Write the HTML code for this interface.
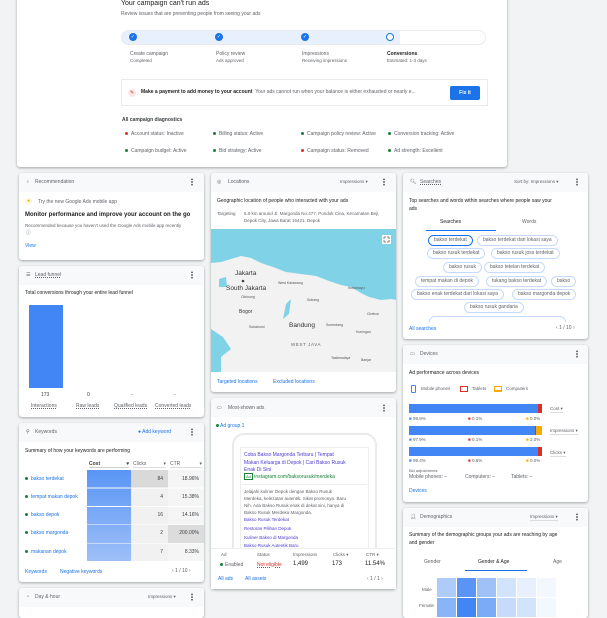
<!DOCTYPE html>
<html><head><meta charset="utf-8"><style>
*{margin:0;padding:0;box-sizing:border-box}
body{width:607px;height:607px;overflow:hidden;background:#f1f3f4;font-family:"Liberation Sans",sans-serif;color:#3c4043;position:relative}
.a{position:absolute;white-space:nowrap}
.card{position:absolute;background:#fff;border-radius:3px;box-shadow:0 1px 2px rgba(60,64,67,.3),0 1px 3px rgba(60,64,67,.15);overflow:hidden}
.hd{position:absolute;left:0;right:0;top:0;height:19px;background:#f8f9fa}
.s5{font-size:5px}.s6{font-size:6px}.s7{font-size:7px}
.b{font-weight:bold}.blue{color:#1a73e8}.g{color:#5f6368}
.keb{position:absolute;width:2px;height:8px;background:radial-gradient(circle,#5f6368 0.9px,transparent 1px) 0 0/2px 2.7px}
.dot{display:inline-block;width:3px;height:3px;border-radius:50%;margin-right:3px;vertical-align:middle}
.chip{position:absolute;height:11px;border:1px solid #c6dafc;border-radius:6px;font-size:5px;line-height:9px;padding:0 5px;color:#5f6368;white-space:nowrap}
.chk{position:absolute;width:8px;height:8px;border-radius:50%;background:#1a73e8;color:#fff;font-size:5px;line-height:8px;text-align:center}
</style></head><body>

<!-- top card -->
<div class="card" style="left:17px;top:-5px;width:490px;height:172px"></div>
<div class="a s7" style="left:121px;top:0px;color:#202124">Your campaign can't run ads</div>
<div class="a s5 g" style="left:121px;top:11px">Review issues that are preventing people from seeing your ads</div>
<div class="a" style="left:121px;top:30px;width:365px;height:15px;border:1px solid #e8eaed;border-radius:8px;background:linear-gradient(90deg,#e8f0fe 0,#e8f0fe 278px,#fff 278px)"></div>
<div class="chk" style="left:129px;top:33px">✓</div>
<div class="chk" style="left:215px;top:33px">✓</div>
<div class="chk" style="left:301px;top:33px">✓</div>
<div class="a" style="left:386px;top:33px;width:8px;height:8px;border-radius:50%;border:1px solid #1a73e8;background:#fff"></div>
<div class="a s5 g" style="left:130px;top:51px">Create campaign</div>
<div class="a s5 g" style="left:130px;top:58px;font-size:4.5px">Completed</div>
<div class="a s5 g" style="left:216px;top:51px">Policy review</div>
<div class="a s5 g" style="left:216px;top:58px;font-size:4.5px">Ads approved</div>
<div class="a s5 g" style="left:302px;top:51px">Impressions</div>
<div class="a s5 g" style="left:302px;top:58px;font-size:4.5px">Receiving impressions</div>
<div class="a s5 b" style="left:387px;top:51px;color:#202124">Conversions</div>
<div class="a s5 g" style="left:387px;top:58px;font-size:4.5px">Estimated: 1-3 days</div>
<div class="a" style="left:121px;top:79px;width:367px;height:27px;border:1px solid #e8eaed"></div>
<div class="a" style="left:128px;top:89px;width:8px;height:8px;border-radius:50%;background:#fce8e6;color:#d93025;font-size:5px;text-align:center;line-height:8px">✎</div>
<div class="a s5" style="left:141px;top:89px"><b style="color:#202124">Make a payment to add money to your account</b> <span class="g">&nbsp;Your ads cannot run when your balance is either exhausted or nearly e...</span></div>
<div class="a s5 b" style="left:450px;top:86px;width:30px;height:14px;background:#1a73e8;color:#fff;border-radius:2px;text-align:center;line-height:14px">Fix it</div>
<div class="a s5 b" style="left:122px;top:117px;color:#3c4043">All campaign diagnostics</div>
<div class="a s5 g" style="left:125px;top:131px"><span class="dot" style="background:#d93025"></span>Account status: Inactive</div>
<div class="a s5 g" style="left:213px;top:131px"><span class="dot" style="background:#188038"></span>Billing status: Active</div>
<div class="a s5 g" style="left:301px;top:131px"><span class="dot" style="background:#188038"></span>Campaign policy review: Active</div>
<div class="a s5 g" style="left:388px;top:131px"><span class="dot" style="background:#188038"></span>Conversion tracking: Active</div>
<div class="a s5 g" style="left:125px;top:148px"><span class="dot" style="background:#188038"></span>Campaign budget: Active</div>
<div class="a s5 g" style="left:213px;top:148px"><span class="dot" style="background:#188038"></span>Bid strategy: Active</div>
<div class="a s5 g" style="left:301px;top:148px"><span class="dot" style="background:#d93025"></span>Campaign status: Removed</div>
<div class="a s5 g" style="left:388px;top:148px"><span class="dot" style="background:#188038"></span>Ad strength: Excellent</div>

<!-- Recommendation -->
<div class="card" style="left:19px;top:173px;width:185px;height:87px"><div class="hd"></div></div>
<div class="a s5 g" style="left:26px;top:179px">♁</div>
<div class="a s5 g" style="left:35px;top:179px">Recommendation</div>
<div class="keb" style="left:191px;top:178px"></div>
<div class="a" style="left:25px;top:198px;width:7px;height:7px;border-radius:50%;background:#fef7e0;color:#f9ab00;font-size:5px;line-height:7px;text-align:center">●</div>
<div class="a s5 g" style="left:38px;top:199px">Try the new Google Ads mobile app</div>
<div class="a s6 b" style="left:25px;top:212px;color:#202124">Monitor performance and improve your account on the go</div>
<div class="a g" style="left:25px;top:223px;font-size:4.5px">Recommended because you haven't used the Google Ads mobile app recently</div>
<div class="a g" style="left:26px;top:229px;font-size:5px">ⓘ</div>
<div class="a s5 blue" style="left:25px;top:243px">View</div>

<!-- Lead funnel -->
<div class="card" style="left:19px;top:266px;width:185px;height:151px"><div class="hd"></div></div>
<div class="a s5 g" style="left:26px;top:272px">☰</div>
<div class="a s5 g" style="left:35px;top:272px;text-decoration:underline dotted">Lead funnel</div>
<div class="keb" style="left:191px;top:271px"></div>
<div class="a s5" style="left:25px;top:290px;color:#202124">Total conversions through your entire lead funnel</div>
<div class="a" style="left:29px;top:305px;width:34px;height:83px;background:#4285f4"></div>
<div class="a s5" style="left:41px;top:392px">173</div>
<div class="a s5" style="left:87px;top:392px">0</div>
<div class="a s5" style="left:131px;top:392px">-</div>
<div class="a s5" style="left:174px;top:392px">-</div>
<div class="a s5 g" style="left:31px;top:403px;text-decoration:underline dotted">Interactions</div>
<div class="a s5 g" style="left:76px;top:403px;text-decoration:underline dotted">Raw leads</div>
<div class="a s5 g" style="left:114px;top:403px;text-decoration:underline dotted">Qualified leads</div>
<div class="a s5 g" style="left:155px;top:403px;text-decoration:underline dotted">Converted leads</div>

<!-- Keywords -->
<div class="card" style="left:19px;top:423px;width:185px;height:159px"><div class="hd"></div></div>
<div class="a s5 g" style="left:26px;top:429px">⚲</div>
<div class="a s5 g" style="left:35px;top:429px">Keywords</div>
<div class="a s5 blue" style="left:138px;top:429px">● Add keyword</div>
<div class="keb" style="left:191px;top:428px"></div>
<div class="a s5" style="left:25px;top:448px;color:#202124">Summary of how your keywords are performing</div>
<div class="a s5 b" style="left:89px;top:461px;width:40px;border-bottom:1px solid #ccc">Cost<span style="float:right">▾</span></div>
<div class="a s5 g" style="left:133px;top:461px;width:33px;border-bottom:1px solid #ddd">Clicks<span style="float:right">▾</span></div>
<div class="a s5 g" style="left:170px;top:461px;width:32px;border-bottom:1px solid #ddd">CTR<span style="float:right">▾</span></div>
<div class="a" style="left:87px;top:470px;width:44px;height:92px;background:linear-gradient(#5a95f5,#9fc0f8)"></div>
<div class="a" style="left:131px;top:470px;width:37px;height:18px;background:#d9d9d9"></div>
<div class="a" style="left:131px;top:488px;width:37px;height:74px;background:#f1f1f1"></div>
<div class="a" style="left:168px;top:470px;width:36px;height:92px;background:#f5f5f5"></div>
<div class="a" style="left:168px;top:525px;width:36px;height:18px;background:#dcdcdc"></div>
<div class="a" style="left:19px;top:470px;width:185px;height:92px;background:repeating-linear-gradient(transparent 0,transparent 17.6px,#fff 17.6px,#fff 18.4px)"></div>
<div class="a s5 blue" style="left:25px;top:476px"><span class="dot" style="background:#188038"></span>bakso terdekat</div>
<div class="a s5 blue" style="left:25px;top:494px"><span class="dot" style="background:#188038"></span>tempat makan depok</div>
<div class="a s5 blue" style="left:25px;top:512px"><span class="dot" style="background:#188038"></span>bakso depok</div>
<div class="a s5 blue" style="left:25px;top:530px"><span class="dot" style="background:#188038"></span>bakso margonda</div>
<div class="a s5 blue" style="left:25px;top:549px"><span class="dot" style="background:#188038"></span>makanan depok</div>
<div class="a s5" style="left:141px;top:476px;width:22px;text-align:right">84</div>
<div class="a s5" style="left:141px;top:494px;width:22px;text-align:right">4</div>
<div class="a s5" style="left:141px;top:512px;width:22px;text-align:right">16</div>
<div class="a s5" style="left:141px;top:530px;width:22px;text-align:right">2</div>
<div class="a s5" style="left:141px;top:549px;width:22px;text-align:right">7</div>
<div class="a s5" style="left:170px;top:476px;width:29px;text-align:right">18.96%</div>
<div class="a s5" style="left:170px;top:494px;width:29px;text-align:right">15.38%</div>
<div class="a s5" style="left:170px;top:512px;width:29px;text-align:right">14.16%</div>
<div class="a s5" style="left:170px;top:530px;width:29px;text-align:right">200.00%</div>
<div class="a s5" style="left:170px;top:549px;width:29px;text-align:right">8.33%</div>
<div class="a s5 blue" style="left:25px;top:569px">Keywords</div>
<div class="a s5 blue" style="left:60px;top:569px">Negative keywords</div>
<div class="a s5 g" style="left:172px;top:568px">‹ 1 / 10 ›</div>

<!-- Day & hour -->
<div class="card" style="left:19px;top:588px;width:185px;height:30px"><div class="hd"></div></div>
<div class="a s5 g" style="left:26px;top:594px">◔</div>
<div class="a s5 g" style="left:35px;top:594px">Day &amp; hour</div>
<div class="a g" style="left:148px;top:594px;font-size:4.5px">Impressions ▾</div>
<div class="keb" style="left:191px;top:593px"></div>

<!-- Locations -->
<div class="card" style="left:211px;top:173px;width:185px;height:219px"><div class="hd"></div></div>
<div class="a s5 g" style="left:217px;top:179px">◎</div>
<div class="a s5 g" style="left:228px;top:179px">Locations</div>
<div class="a g" style="left:340px;top:179px;font-size:4.5px">Impressions ▾</div>
<div class="keb" style="left:383px;top:178px"></div>
<div class="a s5" style="left:217px;top:198px;color:#202124">Geographic location of people who interacted with your ads</div>
<div class="a g" style="left:217px;top:211px;font-size:4.5px">Targeting</div>
<div class="a g" style="left:244px;top:211px;font-size:4.5px;line-height:6.5px">5.0 km around Jl. Margonda No.477, Pondok Cina, Kecamatan Beji,<br>Depok City, Jawa Barat 16421, Depok</div>
<svg class="a" style="left:211px;top:229px" width="185" height="143" viewBox="0 0 185 143">
<rect width="185" height="143" fill="#80d3e7"/>
<path d="M0 34 L10 33 L20 30 L30 27 L40 29 L50 34 L62 38 L75 43 L90 45 L105 47 L118 52 L130 56 L140 58 L150 64 L158 68 L170 71 L180 70 L185 71 L185 143 L10 143 L10 128 L20 120 L12 108 L0 100 Z" fill="#f2f2f2"/>
<path d="M75 75 L80 70 L78 85 L72 90 Z M8 50 L15 48 L16 58 L8 58Z" fill="#80d3e7"/>
<circle cx="32" cy="52" r="1.3" fill="#444"/>
<text x="24" y="46" font-size="6.5" font-family="Liberation Sans" fill="#333">Jakarta</text>
<text x="15" y="61" font-size="6.5" font-family="Liberation Sans" fill="#333">South Jakarta</text>
<text x="30" y="69" font-size="3.5" font-family="Liberation Sans" fill="#555">Cibinong</text>
<text x="28" y="84" font-size="5" font-family="Liberation Sans" fill="#333">Bogor</text>
<text x="67" y="55" font-size="3.5" font-family="Liberation Sans" fill="#555">West Karawang</text>
<text x="96" y="72" font-size="3.5" font-family="Liberation Sans" fill="#555">Subang</text>
<text x="137" y="60" font-size="3.5" font-family="Liberation Sans" fill="#555">Indramayu</text>
<text x="156" y="86" font-size="3.5" font-family="Liberation Sans" fill="#555">Cirebon</text>
<text x="38" y="99" font-size="3.5" font-family="Liberation Sans" fill="#555">Sukabumi</text>
<text x="78" y="98" font-size="6.5" font-family="Liberation Sans" fill="#333">Bandung</text>
<text x="115" y="97" font-size="3.5" font-family="Liberation Sans" fill="#555">Sumedang</text>
<text x="145" y="104" font-size="3.5" font-family="Liberation Sans" fill="#555">Kuningan</text>
<text x="80" y="117" font-size="4.5" font-family="Liberation Sans" fill="#666" letter-spacing="0.6">WEST JAVA</text>
<text x="120" y="130" font-size="3.5" font-family="Liberation Sans" fill="#555">Tasikmalaya</text>
<text x="150" y="132" font-size="3.5" font-family="Liberation Sans" fill="#555">Banjar</text>
<rect x="171" y="6" width="9" height="9" fill="#fff"/><path d="M173 10V8h2M176 8h2v2M178 11v2h-2M175 13h-2v-2" stroke="#666" stroke-width="0.8" fill="none"/>
</svg>
<div class="a s5 blue" style="left:217px;top:379px">Targeted locations</div>
<div class="a s5 blue" style="left:273px;top:379px">Excluded locations</div>

<!-- Most-shown ads -->
<div class="card" style="left:211px;top:398px;width:185px;height:191px"><div class="hd"></div></div>
<div class="a s5 g" style="left:217px;top:405px">▭</div>
<div class="a s5 g" style="left:228px;top:405px">Most-shown ads</div>
<div class="keb" style="left:383px;top:404px"></div>
<div class="a s5 blue" style="left:216px;top:423px"><span class="dot" style="background:#188038;margin-right:1px"></span>Ad group 1</div>
<div class="a" style="left:232px;top:433px;width:145px;height:130px;border:2px solid #e8eaed;border-radius:12px"></div>
<div class="a" style="left:240px;top:447px;width:129px;height:110px;border:1px solid #eee"></div>
<div class="a s5" style="left:244px;top:452px;color:#4a3bd0;line-height:7.5px">Coba Bakso Margonda Terbaru | Tempat<br>Makan Keluarga di Depok | Cari Bakso Rusuk<br>Enak Di Sini</div>
<div class="a s5" style="left:244px;top:474px;color:#188038"><span style="border:1px solid #188038;padding:0 1px;font-size:4px">Ad</span> instagram.com/baksorusuk/merdeka</div>
<div class="a" style="left:242px;top:484px;width:125px;height:1px;background:#eee"></div>
<div class="a g" style="left:244px;top:488px;font-size:4.5px;line-height:7px">Jelajahi kuliner Depok dengan Bakso Rusuk<br>Merdeka, kelezatan autentik. Sikat promonya. Baru<br>Nih. Ada Bakso Rusuk enak di dekat sini, hanya di<br>Bakso Rusuk Merdeka Margonda.</div>
<div class="a" style="left:244px;top:516px;font-size:4.5px;color:#4a3bd0;line-height:8.8px">Bakso Rusuk Terdekat<br>Restoran Pilihan Depok<br>Kuliner Bakso di Margonda<br>Bakso Rusuk Autentik Baru</div>
<div class="a" style="left:211px;top:548px;width:185px;height:41px;background:#fff;border-top:1px solid #eee"></div>
<div class="a g" style="left:221px;top:552px;font-size:4.5px">Ad</div>
<div class="a g" style="left:257px;top:552px;font-size:4.5px">Status</div>
<div class="a g" style="left:293px;top:552px;font-size:4.5px">Impressions</div>
<div class="a g" style="left:333px;top:552px;font-size:4.5px">Clicks ▾</div>
<div class="a g" style="left:366px;top:552px;font-size:4.5px">CTR ▾</div>
<div class="a s5 g" style="left:220px;top:562px"><span class="dot" style="background:#188038;margin-right:2px"></span>Enabled</div>
<div class="a s5" style="left:257px;top:562px;color:#d93025;text-decoration:underline dotted">Not eligible</div>
<div class="a s6" style="left:293px;top:561px;color:#202124">1,499</div>
<div class="a s6" style="left:332px;top:561px;color:#202124">173</div>
<div class="a s6" style="left:365px;top:561px;color:#202124">11.54%</div>
<div class="a s5 blue" style="left:218px;top:576px">All ads</div>
<div class="a s5 blue" style="left:245px;top:576px">All assets</div>
<div class="a s5 g" style="left:367px;top:576px">‹ 1 / 1 ›</div>

<!-- Searches -->
<div class="card" style="left:403px;top:173px;width:185px;height:166px"><div class="hd"></div></div>
<div class="a s5 g" style="left:410px;top:179px">🔍︎</div>
<div class="a s5 g" style="left:420px;top:179px;text-decoration:underline dotted">Searches</div>
<div class="a g" style="left:514px;top:179px;font-size:4.5px">Sort by: Impressions ▾</div>
<div class="keb" style="left:576px;top:178px"></div>
<div class="a s5" style="left:409px;top:198px;color:#202124;line-height:7.5px">Top searches and words within searches where people saw your<br>ads</div>
<div class="a s5" style="left:440px;top:219px;color:#202124">Searches</div>
<div class="a s5 g" style="left:522px;top:219px">Words</div>
<div class="a" style="left:426px;top:230px;width:70px;height:1px;background:#1a73e8"></div>
<div class="chip" style="left:428px;top:235px;border-color:#1a73e8">bakso terdekat</div>
<div class="chip" style="left:477px;top:235px">bakso terdekat dari lokasi saya</div>
<div class="chip" style="left:427px;top:248px">bakso rusuk terdekat</div>
<div class="chip" style="left:491px;top:248px">bakso rusuk joss terdekat</div>
<div class="chip" style="left:443px;top:262px">bakso rusuk</div>
<div class="chip" style="left:484px;top:262px">bakso tetelan terdekat</div>
<div class="chip" style="left:415px;top:276px">tempat makan di depok</div>
<div class="chip" style="left:486px;top:276px">tukang bakso terdekat</div>
<div class="chip" style="left:551px;top:276px">bakso</div>
<div class="chip" style="left:411px;top:289px">bakso enak terdekat dari lokasi saya</div>
<div class="chip" style="left:512px;top:289px">bakso margonda depok</div>
<div class="chip" style="left:464px;top:302px">bakso rusuk gandaria</div>
<div class="a" style="left:429px;top:316px;width:137px;height:6px;border:1px solid #c6dafc;border-bottom:none;border-radius:6px 6px 0 0"></div>
<div class="a s5 blue" style="left:409px;top:326px">All searches</div>
<div class="a s5 g" style="left:556px;top:325px">‹ 1 / 10 ›</div>

<!-- Devices -->
<div class="card" style="left:403px;top:345px;width:185px;height:157px"><div class="hd"></div></div>
<div class="a s5 g" style="left:410px;top:351px">▭</div>
<div class="a s5 g" style="left:420px;top:351px">Devices</div>
<div class="keb" style="left:576px;top:350px"></div>
<div class="a s5" style="left:409px;top:370px;color:#202124">Ad performance across devices</div>
<div class="a" style="left:411px;top:385px;width:5px;height:8px;border:1px solid #4285f4;border-radius:1px"></div>
<div class="a g" style="left:421px;top:386px;font-size:4.5px">Mobile phones</div>
<div class="a" style="left:460px;top:386px;width:8px;height:6px;border:1px solid #d93025"></div>
<div class="a g" style="left:472px;top:386px;font-size:4.5px">Tablets</div>
<div class="a" style="left:494px;top:386px;width:8px;height:6px;border:1px solid #f9ab00;border-bottom-width:2px"></div>
<div class="a g" style="left:506px;top:386px;font-size:4.5px">Computers</div>
<div class="a" style="left:409px;top:404px;width:133px;height:9px;background:linear-gradient(90deg,#4285f4 0,#4285f4 129px,#d93025 129px)"></div>
<div class="a" style="left:409px;top:426px;width:133px;height:9px;background:linear-gradient(90deg,#4285f4 0,#4285f4 126px,#d93025 126px,#d93025 127px,#f9ab00 127px)"></div>
<div class="a" style="left:409px;top:447px;width:133px;height:9px;background:linear-gradient(90deg,#4285f4 0,#4285f4 129px,#d93025 129px)"></div>
<div class="a g" style="left:409px;top:416px;font-size:4.5px"><span style="color:#4285f4">■</span> 99.9%</div>
<div class="a g" style="left:468px;top:416px;font-size:4.5px"><span style="color:#d93025">■</span> 0.1%</div>
<div class="a g" style="left:526px;top:416px;font-size:4.5px"><span style="color:#f9ab00">■</span> 0.0%</div>
<div class="a g" style="left:409px;top:437px;font-size:4.5px"><span style="color:#4285f4">■</span> 97.9%</div>
<div class="a g" style="left:468px;top:437px;font-size:4.5px"><span style="color:#d93025">■</span> 0.1%</div>
<div class="a g" style="left:526px;top:437px;font-size:4.5px"><span style="color:#f9ab00">■</span> 2.0%</div>
<div class="a g" style="left:409px;top:458px;font-size:4.5px"><span style="color:#4285f4">■</span> 99.4%</div>
<div class="a g" style="left:468px;top:458px;font-size:4.5px"><span style="color:#d93025">■</span> 0.6%</div>
<div class="a g" style="left:526px;top:458px;font-size:4.5px"><span style="color:#f9ab00">■</span> 0.0%</div>
<div class="a g" style="left:550px;top:406px;font-size:4.5px;border-bottom:1px solid #ddd">Cost ▾</div>
<div class="a g" style="left:550px;top:428px;font-size:4.5px;border-bottom:1px solid #ddd">Impressions ▾</div>
<div class="a g" style="left:550px;top:450px;font-size:4.5px;border-bottom:1px solid #ddd">Clicks ▾</div>
<div class="a g" style="left:409px;top:468px;font-size:4px">Bid adjustments</div>
<div class="a s5 g" style="left:409px;top:474px">Mobile phones: –</div>
<div class="a s5 g" style="left:465px;top:474px">Computers: –</div>
<div class="a s5 g" style="left:511px;top:474px">Tablets: –</div>
<div class="a s5 blue" style="left:409px;top:488px">Devices</div>

<!-- Demographics -->
<div class="card" style="left:403px;top:508px;width:185px;height:110px"><div class="hd"></div></div>
<div class="a s5 g" style="left:410px;top:514px">👤︎</div>
<div class="a s5 g" style="left:420px;top:514px">Demographics</div>
<div class="a g" style="left:530px;top:514px;font-size:4.5px;border-bottom:1px solid #ddd">Impressions ▾</div>
<div class="keb" style="left:576px;top:513px"></div>
<div class="a s5" style="left:409px;top:532px;color:#202124;line-height:7.5px">Summary of the demographic groups your ads are reaching by age<br>and gender</div>
<div class="a s5 g" style="left:424px;top:559px">Gender</div>
<div class="a s5" style="left:478px;top:559px;color:#202124">Gender &amp; Age</div>
<div class="a s5 g" style="left:553px;top:559px">Age</div>
<div class="a" style="left:465px;top:570px;width:62px;height:1px;background:#1a73e8"></div>
<div class="a g" style="left:422px;top:587px;font-size:4.5px">Male</div>
<div class="a g" style="left:419px;top:603px;font-size:4.5px">Female</div>
<div class="a" style="left:437px;top:578px;display:grid;grid-template-columns:repeat(6,19px);grid-auto-rows:19px;gap:1px">
<div style="background:#aecbfa"></div><div style="background:#5a95f5"></div><div style="background:#a0c0f8"></div><div style="background:#d2e3fc"></div><div style="background:#e8f0fe"></div><div style="background:#f3f7fe"></div>
<div style="background:#8ab4f8"></div><div style="background:#4285f4"></div><div style="background:#7baaf7"></div><div style="background:#c6dafc"></div><div style="background:#d2e3fc"></div><div style="background:#f3f7fe"></div>
</div>
</body></html>
